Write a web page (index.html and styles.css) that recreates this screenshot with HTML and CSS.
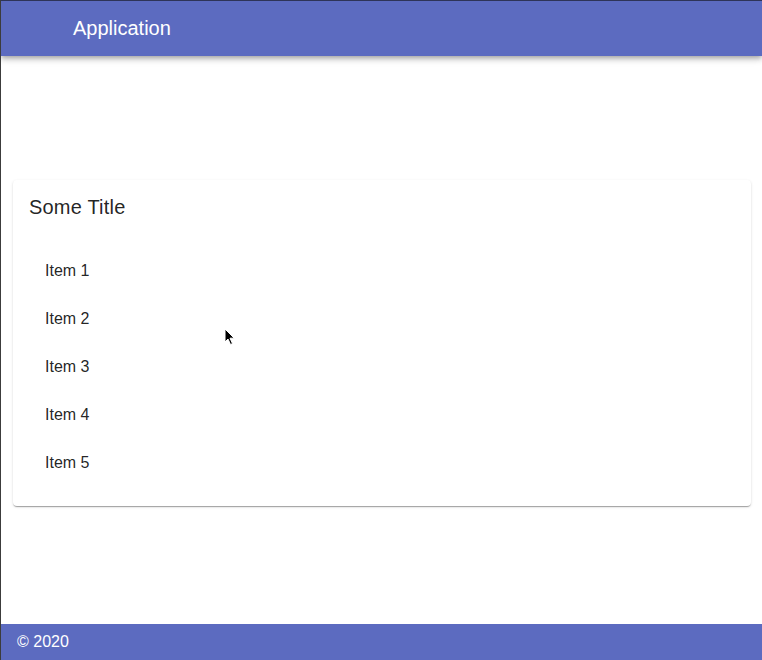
FILE: index.html
```html
<!DOCTYPE html>
<html>
<head>
<meta charset="utf-8">
<link rel="stylesheet" href="styles.css">
</head>
<body>
<div class="page">
  <header class="appbar">
    <span class="appbar-title">Application</span>
  </header>
  <main class="main">
    <section class="card">
      <h2 class="card-title">Some Title</h2>
      <ul class="list">
        <li class="list-item">Item 1</li>
        <li class="list-item">Item 2</li>
        <li class="list-item">Item 3</li>
        <li class="list-item">Item 4</li>
        <li class="list-item">Item 5</li>
      </ul>
    </section>
  </main>
  <footer class="footer">© 2020</footer>
  <svg class="cursor" width="12" height="18" viewBox="0 0 12 18">
    <path d="M1 1 L1 14 L4 11 L6.5 16.5 L8.5 15.6 L6 10.2 L10.2 10.2 Z" fill="#000" stroke="#fff" stroke-width="1"/>
  </svg>
</div>
</body>
</html>
```

FILE: styles.css
```css
html, body {
  margin: 0;
  padding: 0;
  background: #fff;
}
body {
  font-family: "Liberation Sans", Arial, sans-serif;
  color: rgba(0, 0, 0, 0.87);
}
.page {
  position: relative;
  width: 762px;
  height: 660px;
  box-sizing: border-box;
  border-left: 1px solid #3c3c3c;
  display: flex;
  flex-direction: column;
  overflow: hidden;
}
.appbar {
  height: 56px;
  flex: 0 0 56px;
  box-sizing: border-box;
  border-top: 1px solid #2e3458;
  background: #5c6bc0;
  color: #fff;
  display: flex;
  align-items: center;
  padding-left: 72px;
  box-shadow: 0 2px 4px -1px rgba(0,0,0,0.2), 0 4px 5px 0 rgba(0,0,0,0.14), 0 1px 10px 0 rgba(0,0,0,0.12);
  position: relative;
  z-index: 1;
}
.appbar-title {
  font-size: 20px;
  line-height: 24px;
  margin-top: -1px;
}
.main {
  flex: 1;
  padding: 124px 11px 0 12px;
}
.card {
  background: #fff;
  border-radius: 4px;
  box-shadow: 0 2px 1px -1px rgba(0,0,0,0.2), 0 1px 1px 0 rgba(0,0,0,0.14), 0 1px 3px 0 rgba(0,0,0,0.12);
  padding: 15px 16px 19px 16px;
  height: 326px;
  box-sizing: border-box;
}
.card-title {
  margin: 0;
  font-size: 20px;
  line-height: 24px;
  font-weight: 400;
  letter-spacing: 0.2px;
}
.list {
  list-style: none;
  margin: 28px 0 0 0;
  padding: 0;
}
.list-item {
  font-size: 16px;
  line-height: 48px;
  height: 48px;
  padding-left: 16px;
}
.footer {
  flex: 0 0 36px;
  height: 36px;
  background: #5c6bc0;
  color: #fff;
  font-size: 16px;
  line-height: 36px;
  padding-left: 16px;
}
.cursor {
  position: absolute;
  left: 223px;
  top: 328px;
}
```
